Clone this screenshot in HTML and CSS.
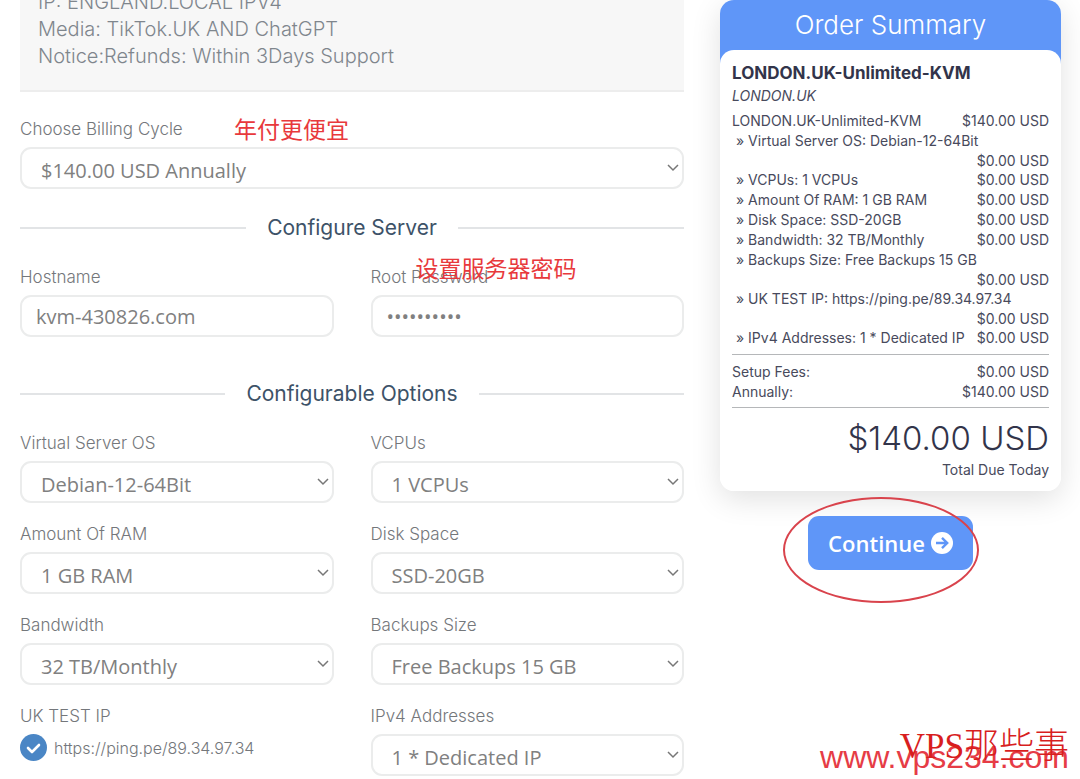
FILE: index.html
```
<!DOCTYPE html>
<html lang="en">
<head>
    <meta charset="UTF-8">
    <meta name="viewport" content="width=device-width, initial-scale=1.0">
    <title>Configure - LONDON.UK-Unlimited-KVM</title>
    <link rel="stylesheet" href="styles.css">
</head>
<body>

    <form class="page">
        <main class="config">
            <div class="product-info">
                IP: ENGLAND.LOCAL IPV4<br>
                Media: TikTok.UK AND ChatGPT<br>
                Notice:Refunds: Within 3Days Support
            </div>

            <div class="field">
                <label for="billing">Choose Billing Cycle</label>
                <select id="billing">
                    <option>$140.00 USD Annually</option>
                </select>
                <span class="note note-billing" lang="zh">年付更便宜</span>
            </div>

            <h2 class="section-title">Configure Server</h2>
            <div class="fields server-fields">
                <div class="field">
                    <label for="hostname">Hostname</label>
                    <input type="text" id="hostname" value="kvm-430826.com">
                </div>
                <div class="field">
                    <label for="rootpw">Root Password</label>
                    <input type="password" id="rootpw" value="abcdefghij" autocomplete="off">
                    <span class="note note-password" lang="zh">设置服务器密码</span>
                </div>
            </div>

            <h2 class="section-title">Configurable Options</h2>
            <div class="fields">
                <div class="field">
                    <label for="os">Virtual Server OS</label>
                    <select id="os"><option>Debian-12-64Bit</option></select>
                </div>
                <div class="field">
                    <label for="cpu">VCPUs</label>
                    <select id="cpu"><option>1 VCPUs</option></select>
                </div>
                <div class="field">
                    <label for="ram">Amount Of RAM</label>
                    <select id="ram"><option>1 GB RAM</option></select>
                </div>
                <div class="field">
                    <label for="disk">Disk Space</label>
                    <select id="disk"><option>SSD-20GB</option></select>
                </div>
                <div class="field">
                    <label for="bandwidth">Bandwidth</label>
                    <select id="bandwidth"><option>32 TB/Monthly</option></select>
                </div>
                <div class="field">
                    <label for="backups">Backups Size</label>
                    <select id="backups"><option>Free Backups 15 GB</option></select>
                </div>
                <div class="field">
                    <span class="field-name">UK TEST IP</span>
                    <label class="check">
                        <input type="checkbox" checked>
                        https://ping.pe/89.34.97.34
                    </label>
                </div>
                <div class="field">
                    <label for="ipv4">IPv4 Addresses</label>
                    <select id="ipv4"><option>1 * Dedicated IP</option></select>
                </div>
            </div>
        </main>

        <aside class="sidebar">
            <div class="summary">
                <h2 class="summary-title">Order Summary</h2>
                <div class="summary-body">
                    <h3>LONDON.UK-Unlimited-KVM</h3>
                    <em class="group">LONDON.UK</em>
                    <div class="row"><span>LONDON.UK-Unlimited-KVM</span><span class="price">$140.00 USD</span></div>
                    <div class="row option"><span>» Virtual Server OS: Debian-12-64Bit</span><span class="price">$0.00 USD</span></div>
                    <div class="row option"><span>» VCPUs: 1 VCPUs</span><span class="price">$0.00 USD</span></div>
                    <div class="row option"><span>» Amount Of RAM: 1 GB RAM</span><span class="price">$0.00 USD</span></div>
                    <div class="row option"><span>» Disk Space: SSD-20GB</span><span class="price">$0.00 USD</span></div>
                    <div class="row option"><span>» Bandwidth: 32 TB/Monthly</span><span class="price">$0.00 USD</span></div>
                    <div class="row option"><span>» Backups Size: Free Backups 15 GB</span><span class="price">$0.00 USD</span></div>
                    <div class="row option"><span>» UK TEST IP: https://ping.pe/89.34.97.34</span><span class="price">$0.00 USD</span></div>
                    <div class="row option"><span>» IPv4 Addresses: 1 * Dedicated IP</span><span class="price">$0.00 USD</span></div>
                    <div class="fees">
                        <div class="row"><span>Setup Fees:</span><span class="price">$0.00 USD</span></div>
                        <div class="row"><span>Annually:</span><span class="price">$140.00 USD</span></div>
                    </div>
                    <div class="total">$140.00 USD</div>
                    <div class="due">Total Due Today</div>
                </div>
            </div>

            <div class="actions">
                <button type="submit" class="continue">
                    Continue
                    <svg width="22" height="22" viewBox="0 0 22 22" aria-hidden="true">
                        <circle cx="11" cy="11" r="11" fill="#fff"/>
                        <path d="M5 11h11M11 5.8l5.2 5.2-5.2 5.2" fill="none" stroke="#5f96f8" stroke-width="2.4"/>
                    </svg>
                </button>
                <span class="ring"></span>
            </div>
        </aside>
    </form>

    <div class="watermark watermark-url">www.vps234.com</div>
    <div class="watermark watermark-name" lang="zh">VPS那些事</div>

</body>
</html>
```
FILE: styles.css
```
* {
    box-sizing: border-box;
}
body {
    margin: 0;
    font-family: 'Inter', sans-serif;
    font-weight: 300;
    background-color: #fff;
    color: #74777b;
}
h2, h3 {
    margin: 0;
}
.page {
    display: grid;
    grid-template-columns: 664fr 341fr;
    gap: 36px;
    padding: 0 19px 0 20px;
}
.config {
    margin-top: -11px;
}
.product-info {
    margin-bottom: 27px;
    padding: 0 18px 20px;
    border-bottom: 2px solid #ededed;
    background-color: #f7f7f7;
    color: #7f868d;
    font-size: 20px;
    line-height: 27px;
}
.fields {
    display: grid;
    grid-template-columns: 1fr 1fr;
    gap: 21px 37px;
}
.server-fields {
    margin-bottom: 45px;
}
.field {
    position: relative;
}
.field > label:not(.check),
.field-name {
    display: block;
    margin-bottom: 8px;
    font-size: 17px;
    line-height: 20px;
}
.field select,
.field input[type="text"],
.field input[type="password"] {
    display: block;
    width: 100%;
    height: 42px;
    border: 2px solid #ebecec;
    border-radius: 11px;
    background-color: #fff;
    color: #808080;
    font-family: 'Open Sans', sans-serif;
    font-size: 20px;
}
.field input[type="text"],
.field input[type="password"] {
    padding: 0 14px;
}
.field select {
    appearance: none;
    padding: 4px 30px 0 19px;
    background-image: url("data:image/svg+xml,%3Csvg xmlns='http://www.w3.org/2000/svg' width='12' height='8'%3E%3Cpath d='M1 1l5 5 5-5' fill='none' stroke='%23777' stroke-width='1.5'/%3E%3C/svg%3E");
    background-repeat: no-repeat;
    background-position: right 3px center;
}
.section-title {
    display: flex;
    align-items: center;
    gap: 21px;
    margin: 27px 0;
    color: #3d5268;
    font-size: 21px;
    font-weight: 400;
    line-height: 24px;
}
.section-title::before,
.section-title::after {
    content: "";
    flex: 1;
    height: 2px;
    background-color: #e2e4e6;
}
.check {
    display: flex;
    align-items: center;
    gap: 7px;
    font-size: 16px;
}
.check input {
    appearance: none;
    width: 27px;
    height: 27px;
    margin: 0;
    border-radius: 50%;
    background: #4a86c5 url("data:image/svg+xml,%3Csvg xmlns='http://www.w3.org/2000/svg' width='15' height='12'%3E%3Cpath d='M2 6l4 4 7-7' fill='none' stroke='%23fff' stroke-width='2.6' stroke-linecap='round' stroke-linejoin='round'/%3E%3C/svg%3E") no-repeat center;
}

/* order summary */
.summary {
    border-radius: 14px;
    box-shadow: 0 8px 30px rgba(0, 0, 0, 0.12);
}
.summary-title {
    padding: 10px 10px 26px;
    border-radius: 14px 14px 0 0;
    background-color: #5f96f8;
    color: #fff;
    font-size: 26px;
    font-weight: 300;
    line-height: 30px;
    text-align: center;
}
.summary-body {
    margin-top: -16px;
    padding: 13px 12px 11px;
    border-radius: 14px;
    background-color: #fff;
    color: #484a5c;
    font-size: 14px;
    font-weight: 400;
    line-height: 20px;
}
.summary-body h3 {
    color: #32344a;
    font-size: 17px;
    font-weight: 700;
}
.group {
    display: block;
    margin: 3px 0 5px;
}
.row {
    display: flex;
    flex-wrap: wrap;
    align-items: baseline;
    column-gap: 8px;
}
.option {
    padding-left: 4px;
}
.price {
    margin-left: auto;
    line-height: 19px;
}
.fees {
    margin: 6px 0 14px;
    padding: 7px 0 5px;
    border-top: 1px solid #b5b7b9;
    border-bottom: 1px solid #b5b7b9;
}
.total {
    margin-bottom: 6px;
    color: #32344a;
    font-size: 33px;
    font-weight: 300;
    line-height: 32px;
    text-align: right;
}
.due {
    text-align: right;
}
.actions {
    display: flex;
    justify-content: center;
    position: relative;
    margin-top: 25px;
}
.continue {
    display: flex;
    align-items: center;
    gap: 6px;
    height: 54px;
    padding: 0 20px;
    border: 0;
    border-radius: 11px;
    background-color: #5f96f8;
    color: #fff;
    font-family: 'Open Sans', sans-serif;
    font-size: 22px;
    font-weight: 600;
    cursor: pointer;
}

/* hand-drawn notes and watermark */
.ring {
    position: absolute;
    top: -19px;
    left: 50%;
    width: 196px;
    height: 106px;
    margin-left: -108px;
    border: 2px solid #d9434c;
    border-radius: 50%;
    pointer-events: none;
}
.note {
    position: absolute;
    color: #e8393c;
    font-family: 'Noto Sans CJK SC', sans-serif;
    font-size: 23px;
    font-weight: 400;
    line-height: 24px;
    white-space: nowrap;
}
.note-billing {
    top: -3px;
    left: 214px;
}
.note-password {
    top: -12px;
    left: 45px;
}
.watermark {
    position: absolute;
    right: 11px;
    white-space: nowrap;
    line-height: 40px;
    pointer-events: none;
}
.watermark-url {
    top: 737px;
    color: #e63c46;
    font-family: 'Liberation Sans', sans-serif;
    font-size: 32px;
    font-weight: 400;
}
.watermark-name {
    top: 727px;
    color: #d81e1e;
    font-family: 'Liberation Serif', 'Noto Sans CJK SC', serif;
    font-size: 35px;
    font-weight: 300;
}
```
